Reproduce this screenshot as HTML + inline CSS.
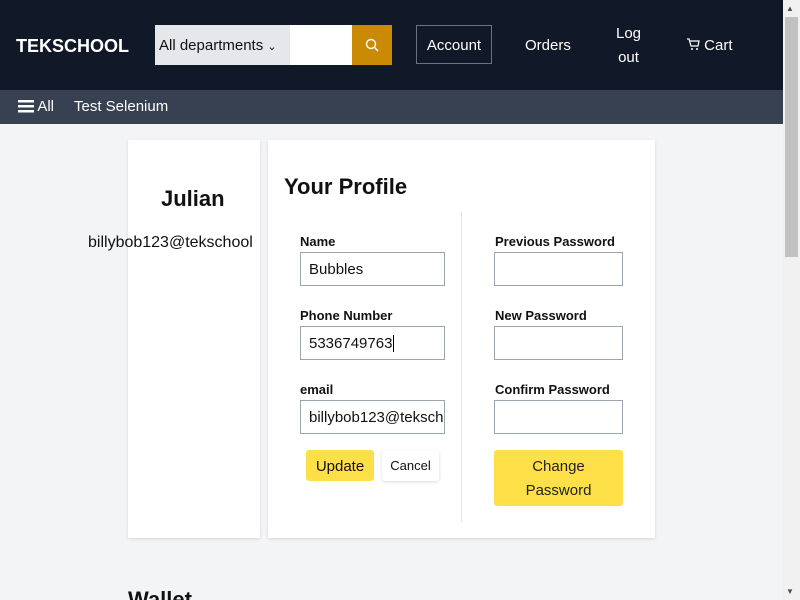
<!DOCTYPE html>
<html style="overflow:hidden;width:800px;height:600px"><head><style>
*{box-sizing:border-box;margin:0;padding:0}
body{width:800px;height:600px;overflow:hidden;background:#f3f4f6;font-family:"Liberation Sans",sans-serif;position:relative}
.a{position:absolute}
.hdr{left:0;top:0;width:783px;height:90px;background:#111827}
.sub{left:0;top:90px;width:783px;height:34px;background:#374151;color:#fff;font-size:15px}
.w{color:#fff}
.card{background:#fff;box-shadow:0 1px 3px rgba(0,0,0,.12)}
.lbl{font-size:13px;font-weight:bold;color:#111}
.inp{border:1px solid #9ca3af;background:#fff;font-size:15px;color:#111;padding:0 8px;line-height:34px;height:34px;overflow:hidden;white-space:nowrap}
</style></head><body>
<div class="a hdr"></div>
<div class="a w" style="left:16px;top:36px;font-size:18px;font-weight:bold">TEKSCHOOL</div>
<div class="a" style="left:155px;top:25px;width:135px;height:40px;background:#e5e7eb;font-size:15px;color:#111;padding:12px 0 0 4px">All departments <span style="font-size:11px">&#x2304;</span></div>
<div class="a" style="left:290px;top:25px;width:62px;height:40px;background:#fff"></div>
<div class="a" style="left:352px;top:25px;width:40px;height:40px;background:#ca8a04">
<svg width="40" height="40"><circle cx="19" cy="19" r="4.5" fill="none" stroke="#fff" stroke-width="1.4"/><line x1="22.3" y1="22.3" x2="26" y2="26" stroke="#fff" stroke-width="1.4"/></svg></div>
<div class="a w" style="left:416px;top:25px;width:76px;height:39px;border:1px solid #6b7280;font-size:15px;text-align:center;line-height:39px">Account</div>
<div class="a w" style="left:525px;top:37px;font-size:15px">Orders</div>
<div class="a w" style="left:616px;top:22px;font-size:15px;line-height:24px;text-align:center">Log<br>out</div>
<div class="a w" style="left:686px;top:37px;font-size:15px"><svg width="14" height="14" viewBox="0 0 14 14" style="vertical-align:-1px"><path d="M1 2h2l2 7h7l1-5H4" fill="none" stroke="#fff" stroke-width="1.2"/><circle cx="6" cy="12" r="1" fill="#fff"/><circle cx="11" cy="12" r="1" fill="#fff"/></svg> Cart</div>
<div class="a sub"></div>
<div class="a w" style="left:18px;top:98px;font-size:15px"><svg width="16" height="14" style="vertical-align:-2px"><rect y="1" width="16" height="2.5" fill="#fff"/><rect y="6" width="16" height="2.5" fill="#fff"/><rect y="11" width="16" height="2.5" fill="#fff"/></svg> All</div>
<div class="a w" style="left:74px;top:98px;font-size:15px">Test Selenium</div>
<div class="a card" style="left:128px;top:140px;width:132px;height:398px;overflow:visible"></div>
<div class="a" style="left:161px;top:186px;font-size:22px;font-weight:bold;color:#111">Julian</div>
<div class="a" style="left:88px;top:234px;font-size:16px;color:#111;width:180px;overflow:hidden;white-space:nowrap">billybob123@tekschool</div>
<div class="a card" style="left:268px;top:140px;width:387px;height:398px"></div>
<div class="a" style="left:284px;top:174px;font-size:22px;font-weight:bold;color:#111">Your Profile</div>
<div class="a" style="left:461px;top:212px;width:1px;height:310px;background:#e5e7eb"></div>
<div class="a lbl" style="left:300px;top:234px">Name</div>
<div class="a inp" style="left:300px;top:252px;width:145px">Bubbles</div>
<div class="a lbl" style="left:300px;top:308px">Phone Number</div>
<div class="a inp" style="left:300px;top:326px;width:145px">5336749763<span style="border-left:1px solid #000;margin-left:1px"></span></div>
<div class="a lbl" style="left:300px;top:382px">email</div>
<div class="a inp" style="left:300px;top:400px;width:145px;padding-right:0">billybob123@tekschool</div>
<div class="a" style="left:306px;top:450px;width:68px;height:31px;background:#fde047;border-radius:3px;font-size:15px;text-align:center;line-height:33px;color:#111">Update</div>
<div class="a" style="left:382px;top:450px;width:57px;height:31px;background:#fff;border-radius:3px;box-shadow:0 1px 3px rgba(0,0,0,.15);font-size:13px;text-align:center;line-height:32px;color:#111">Cancel</div>
<div class="a lbl" style="left:495px;top:234px">Previous Password</div>
<div class="a inp" style="left:494px;top:252px;width:129px"></div>
<div class="a lbl" style="left:495px;top:308px">New Password</div>
<div class="a inp" style="left:494px;top:326px;width:129px"></div>
<div class="a lbl" style="left:495px;top:382px">Confirm Password</div>
<div class="a inp" style="left:494px;top:400px;width:129px"></div>
<div class="a" style="left:494px;top:450px;width:129px;height:56px;background:#fde047;border-radius:3px;font-size:15px;text-align:center;line-height:24px;padding-top:5px;color:#222">Change<br>Password</div>
<div class="a" style="left:128px;top:587px;font-size:22px;font-weight:bold;color:#111;height:13px;overflow:visible">Wallet</div>
<div class="a" style="left:783px;top:0;width:17px;height:600px;background:#f1f1f1"></div>
<div class="a" style="left:785px;top:17px;width:13px;height:240px;background:#c1c1c1"></div>
<div class="a" style="left:786px;top:4px;font-size:8px;color:#505050">&#9650;</div>
<div class="a" style="left:786px;top:587px;font-size:8px;color:#505050">&#9660;</div>
</body></html>
